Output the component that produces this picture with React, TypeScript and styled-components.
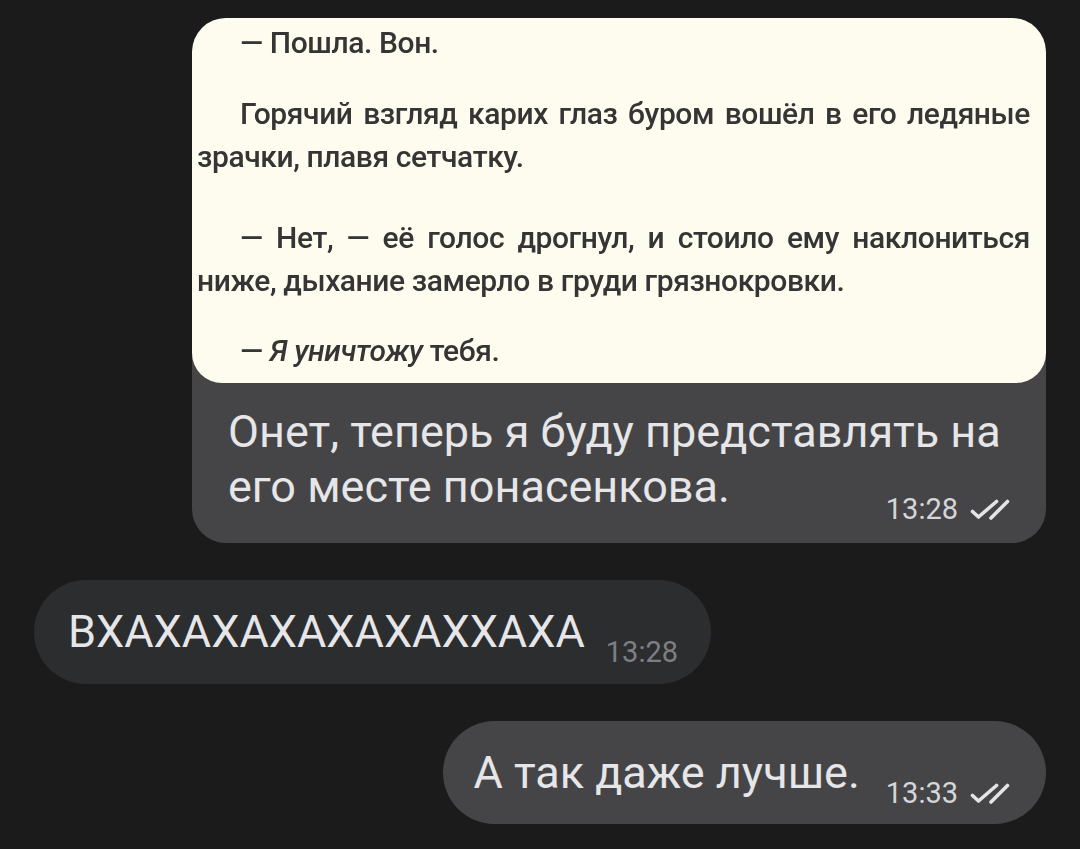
import styled, { createGlobalStyle } from 'styled-components'

const GlobalStyle = createGlobalStyle`
  html, body {
    margin: 0;
    padding: 0;
    background: #1b1b1c;
  }
  body {
    font-family: Roboto, 'Noto Sans', sans-serif;
    -webkit-font-smoothing: antialiased;
  }
`

const Feed = styled.div`
  display: flex;
  flex-direction: column;
  gap: 37px;
  padding: 18px 34px 0;
  min-height: 849px;
  box-sizing: border-box;
`

const Row = styled.div<{ $out?: boolean }>`
  display: flex;
  justify-content: ${(p) => (p.$out ? 'flex-end' : 'flex-start')};
`

const MediaBubble = styled.div`
  width: 854px;
  background: #454547;
  border-radius: 34px;
  overflow: hidden;
  display: flex;
  flex-direction: column;
`

const Shot = styled.div`
  height: 365px;
  background: #fdfcef;
  border-radius: 30px;
  padding: 3px 16px 0 5px;
  box-sizing: border-box;
  overflow: hidden;
  color: #353535;
  font-family: Roboto, sans-serif;
  font-weight: 500;
  font-size: 30px;
  line-height: 43px;
  letter-spacing: -0.4px;
  filter: blur(0.35px);
  display: flex;
  flex-direction: column;
`

const Para = styled.div<{ $top?: number }>`
  display: flex;
  flex-direction: column;
  margin-top: ${(p) => p.$top ?? 0}px;
`

const Line = styled.div<{ $indent?: boolean; $justify?: boolean }>`
  white-space: ${(p) => (p.$justify ? 'normal' : 'nowrap')};
  padding-left: ${(p) => (p.$indent ? '43px' : '0')};
  text-align: ${(p) => (p.$justify ? 'justify' : 'left')};
  text-align-last: ${(p) => (p.$justify ? 'justify' : 'auto')};
`

const Caption = styled.div`
  display: flex;
  flex-direction: column;
  padding: 21px 36px 19px 36px;
`

const Text = styled.div`
  color: #e6e6e8;
  font-size: 45px;
  line-height: 55px;
`

const Bubble = styled.div<{ $out?: boolean }>`
  display: flex;
  align-items: flex-end;
  gap: ${(p) => (p.$out ? '26px' : '21px')};
  background: ${(p) => (p.$out ? '#454547' : '#2c2d2f')};
  border-radius: 52px;
  padding: ${(p) => (p.$out ? '24px 36px 24px 30px' : '24px 33px 25px 34px')};
`

const Meta = styled.div<{ $out?: boolean; $pull?: boolean }>`
  display: flex;
  align-items: center;
  gap: 12px;
  flex-shrink: 0;
  align-self: flex-end;
  margin-bottom: ${(p) => (p.$pull ? '0' : '-8px')};
  margin-top: ${(p) => (p.$pull ? '-19px' : '0')};
  color: ${(p) => (p.$out ? '#d6d6da' : '#7e7f83')};
  font-size: 29px;
  line-height: 29px;
`

const Checks = () => (
  <svg width="40" height="22" viewBox="0 0 40 22" fill="none">
    <path
      d="M2.5 12.5 L8.5 18 L26.5 2.5 M21 19 L37.5 2.5"
      stroke="#e4e4e7"
      strokeWidth="3.6"
      strokeLinecap="round"
      strokeLinejoin="round"
    />
  </svg>
)

export default function App() {
  return (
    <>
      <GlobalStyle />
      <Feed>
        <Row $out>
          <MediaBubble>
            <Shot>
              <Para>
                <Line $indent>— Пошла. Вон.</Line>
              </Para>
              <Para $top={28}>
                <Line $indent $justify>
                  Горячий взгляд карих глаз буром вошёл в его ледяные
                </Line>
                <Line>зрачки, плавя сетчатку.</Line>
              </Para>
              <Para $top={38}>
                <Line $indent $justify>
                  — Нет, — её голос дрогнул, и стоило ему наклониться
                </Line>
                <Line>ниже, дыхание замерло в груди грязнокровки.</Line>
              </Para>
              <Para $top={27}>
                <Line $indent>
                  — <i>Я уничтожу</i> тебя.
                </Line>
              </Para>
            </Shot>
            <Caption>
              <Text>
                Онет, теперь я буду представлять на
                <br />
                его месте понасенкова.
              </Text>
              <Meta $out $pull>
                <span>13:28</span>
                <Checks />
              </Meta>
            </Caption>
          </MediaBubble>
        </Row>

        <Row>
          <Bubble>
            <Text>ВХАХАХАХАХАХАХХАХА</Text>
            <Meta>
              <span>13:28</span>
            </Meta>
          </Bubble>
        </Row>

        <Row $out>
          <Bubble $out>
            <Text>А так даже лучше.</Text>
            <Meta $out>
              <span>13:33</span>
              <Checks />
            </Meta>
          </Bubble>
        </Row>
      </Feed>
    </>
  )
}
